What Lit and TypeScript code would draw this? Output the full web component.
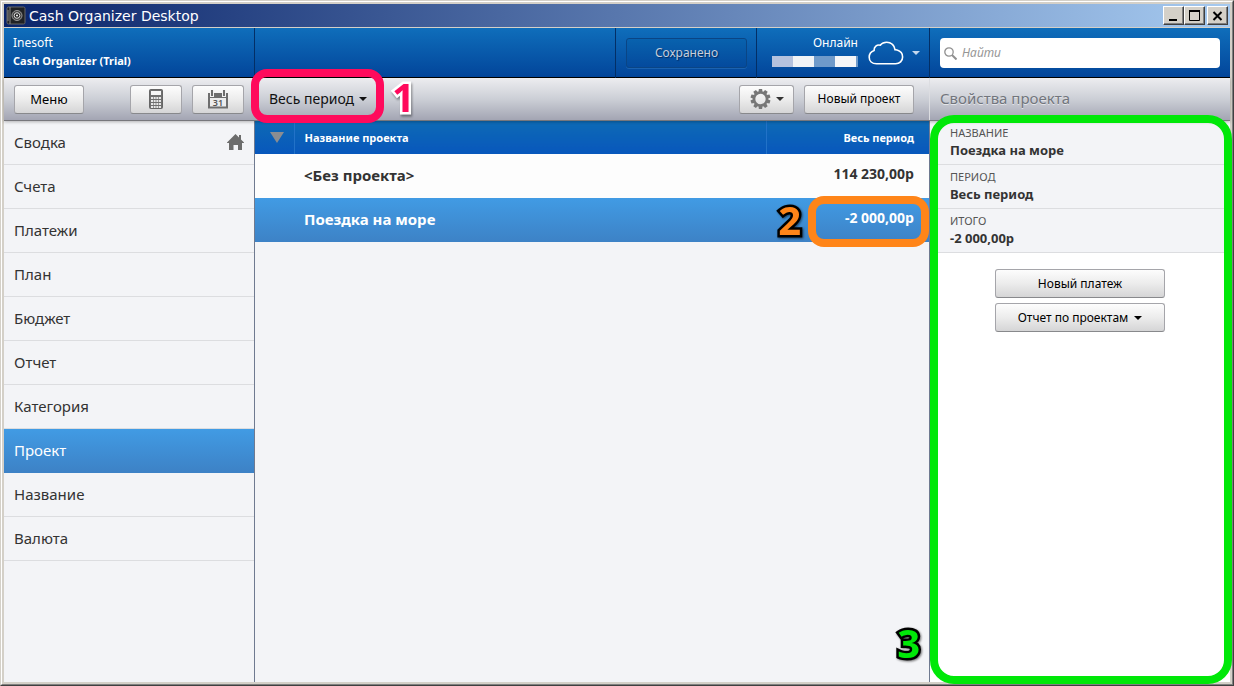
import { LitElement, html, css, svg } from "lit";
import { customElement, state } from "lit/decorators.js";

const sections = ["Сводка", "Счета", "Платежи", "План", "Бюджет", "Отчет", "Категория", "Проект", "Название", "Валюта"];
const projects = [
  { name: "<Без проекта>", total: "114 230,00р" },
  { name: "Поездка на море", total: "-2 000,00р" },
];
const details = [
  ["Название", "Поездка на море"],
  ["Период", "Весь период"],
  ["Итого", "-2 000,00р"],
];
const accountMask = ["#b5c2de", "#f1f3f6", "#6f9aca", "#f5f6f8"];

const caret = html`<svg class="caret" width="8" height="4" viewBox="0 0 8 4" aria-hidden="true"><path d="M0 0h8L4 4z" fill="currentColor"/></svg>`;

@customElement("app-root")
export class AppRoot extends LitElement {
  @state() private section = "Проект";
  @state() private project = 1;

  static styles = css`
    :host {
      display: block;
      font-family: "Noto Sans", "Open Sans", sans-serif;
      font-size: 13px;
      line-height: 18px;
      color: #333;
    }
    * { box-sizing: border-box; }
    button, input { font: inherit; color: inherit; margin: 0; }
    button { cursor: pointer; white-space: nowrap; }
    svg { display: block; flex: none; }
    .window {
      position: relative;
      min-height: 100vh;
      display: flex;
      flex-direction: column;
      background: #d4d0c8;
      border: 1px solid #d4d0c8;
      border-right-color: #404040;
      border-bottom-color: #404040;
    }
    .frame {
      flex: 1;
      display: flex;
      flex-direction: column;
      border: 1px solid #fff;
      border-right-color: #808080;
      border-bottom-color: #808080;
      padding: 2px;
    }
    .titlebar {
      display: flex;
      align-items: center;
      gap: 3px;
      height: 24px;
      padding: 0 2px;
      background: linear-gradient(90deg, #0a246a, #a6caf0);
      border-bottom: 1px solid #d4d0c8;
      color: #fff;
    }
    .titlebar h1 { flex: 1; margin: 0; font: 400 14px/20px "DejaVu Sans", sans-serif; }
    .winbuttons { display: flex; }
    .winbuttons button {
      display: grid;
      place-items: center;
      width: 21px;
      height: 19px;
      padding: 0;
      color: #000;
      background: #d4d0c8;
      border: 1px solid #fff;
      border-right-color: #404040;
      border-bottom-color: #404040;
      box-shadow: inset -1px -1px #808080;
    }
    .winbuttons button:last-child { margin-left: 2px; }
    .columns { display: grid; grid-template-columns: 250px minmax(0, 1fr) 301px; }
    .header {
      height: 50px;
      color: #fff;
      background: linear-gradient(#0f6ebb, #02459a);
      border-bottom: 1px solid #000;
    }
    .header > * + *, .cell { border-left: 1px solid #032f66; }
    .brand { padding: 6px 9px; font-size: 12px; }
    .brand strong { display: block; font-size: 11px; }
    .status { display: flex; justify-content: flex-end; }
    .cell { display: flex; align-items: center; }
    .cell.save { padding: 0 9px 0 10px; }
    .saved {
      width: 121px;
      height: 30px;
      padding: 0;
      color: #c6cedb;
      font-size: 12px;
      text-shadow: 1px 1px 1px #012a60;
      background: linear-gradient(#0862ae, #044a9d);
      border: 1px solid #0a4585;
      border-radius: 3px;
      box-shadow: 0 1px #1b62b0;
    }
    .cell.account { gap: 10px; padding: 0 9px 0 15px; }
    .account .who { padding-bottom: 6px; font-size: 12px; text-align: right; }
    .account .mask { display: flex; height: 11px; margin-top: 4px; }
    .mask span { width: 21px; }
    .mask span:last-child { width: 23px; border-right: 2px solid #6f9aca; }
    .cloudlink {
      display: flex;
      align-items: center;
      gap: 8px;
      padding: 0;
      border: 0;
      background: none;
      color: #c4d7ee;
    }
    .search { padding: 10px; }
    .search label {
      display: flex;
      align-items: center;
      gap: 5px;
      height: 30px;
      padding: 0 4px;
      background: #fff;
      border-radius: 4px;
    }
    .search input { flex: 1; min-width: 0; padding: 0; border: 0; outline: 0; background: none; font-size: 12px; color: #333; }
    .search input::placeholder { color: #969696; font-style: italic; opacity: 1; }
    .toolbar {
      position: relative;
      height: 43px;
      background: linear-gradient(#ededf0, #cccfd6 50%, #a3a5b3);
      border-bottom: 1px solid #77777c;
      box-shadow: 0 1px 3px #0004;
    }
    .toolbar > * { display: flex; align-items: center; padding: 0 10px; gap: 10px; }
    .toolbar h2 {
      margin: 0;
      padding-bottom: 2px;
      border-left: 1px solid #dcdde1;
      color: #71757c;
      font-size: 15px;
      font-weight: 400;
      text-shadow: 0 1px #e4e5e9;
    }
    .toolbar .center { padding-right: 15px; }
    .btn {
      display: flex;
      align-items: center;
      justify-content: center;
      gap: 6px;
      height: 29px;
      padding: 0 10px;
      color: #000;
      background: linear-gradient(#fdfdfd, #ececec 50%, #d5d5d6);
      border: 1px solid #a5a5aa;
      border-bottom-color: #88898c;
      border-radius: 3px;
    }
    .create { width: 110px; font-size: 12px; }
    .menu { width: 70px; margin-right: auto; }
    .icon { width: 52px; padding: 0; }
    .gear { width: 55px; padding: 0; gap: 5px; color: #333; }
    .period {
      display: flex;
      align-items: center;
      gap: 5px;
      height: 30px;
      margin-right: auto;
      padding: 0 5px;
      border: 0;
      background: none;
      color: #111;
      font-size: 14px;
    }
    .content { flex: 1; background: #f3f4f7; }
    nav { display: flex; flex-direction: column; }
    nav a {
      display: flex;
      align-items: center;
      justify-content: space-between;
      height: 44px;
      padding: 0 10px 2px;
      border-bottom: 1px solid #dcdde0;
      color: #333;
      font-size: 15px;
      line-height: 20px;
      text-decoration: none;
    }
    nav a.on { color: #fff; background: linear-gradient(#419be4, #3d82c6); border-color: #3d82c6; }
    nav svg { color: #6c6c6c; }
    main { border-left: 1px solid #6f7a90; }
    table { width: 100%; border-collapse: collapse; table-layout: fixed; }
    th {
      height: 33px;
      padding: 0;
      text-align: left;
      color: #fff;
      font-size: 11px;
      background: linear-gradient(#0d6ab5, #0857bc);
    }
    th + th { border-left: 1px solid #2272c8; }
    .sort { width: 39px; }
    .sort svg { margin-left: 15px; }
    th.name { padding-left: 10px; }
    .total { width: 163px; text-align: right; padding-right: 15px; }
    td { height: 44px; padding: 0 0 2px; background: #fdfdfd; font-weight: 700; }
    td.name { padding-left: 10px; font-size: 15px; }
    td.total { padding-bottom: 4px; font-size: 14px; }
    tr.on { color: #fff; background: linear-gradient(#419be4, #3d82c6); }
    tr.on td { background: none; }
    aside { border-left: 1px solid #6f7a90; background: #fff; }
    dl { margin: 0; }
    dl div { height: 44px; padding: 3px 20px; background: #f3f4f7; border-bottom: 1px solid #dcdde0; }
    dt { font-size: 11px; line-height: 17px; text-transform: uppercase; color: #555; }
    dd { margin: 0; font-size: 13px; font-weight: 700; }
    .actions { display: flex; flex-direction: column; align-items: center; gap: 5px; padding: 16px; }
    .actions .btn { width: 170px; font-size: 12px; }
    .mark { position: absolute; pointer-events: none; }
    .ring { border: 8px solid; border-radius: 16px; }
    .ring.one { left: 250px; top: 68px; width: 133px; height: 54px; border-color: #ff0a5c; }
    .ring.two { right: 304px; top: 195px; width: 121px; height: 51px; border-color: #ff8519; }
    .ring.three { right: 1px; top: 114px; bottom: 1px; width: 302px; border-color: #00e808; border-radius: 24px; }
    .num { font: 700 40px/40px "Open Sans", "Noto Sans", sans-serif; paint-order: stroke; stroke-linejoin: round; -webkit-text-stroke: 5px #000; }
    .num.one { left: 391px; top: 76px; color: #ff0a5c; -webkit-text-stroke-color: #fff; filter: drop-shadow(1px 2px 1px #0006); }
    .num.two { right: 432px; top: 199px; color: #ff8519; filter: drop-shadow(1px 1px 1px #0008); }
    .num.three { right: 313px; bottom: 22px; color: #00e808; filter: drop-shadow(1px 1px 1px #0008); }
  `;

  render() {
    return html`
      <div class="window">
        <div class="frame">
          <div class="titlebar">
            <svg width="20" height="20" viewBox="0 0 20 20" aria-hidden="true">
              <rect x="1" y="1" width="18" height="17" rx="1.5" fill="#202225" stroke="#666"/>
              <path d="M4 1v17M2 4v11" stroke="#888"/>
              <circle cx="11" cy="9.500" r="5" fill="#444" stroke="#999"/>
              <circle cx="11" cy="9.500" r="2.800" fill="#222" stroke="#ddd"/>
              <circle cx="11" cy="9.500" r="1" fill="#fff"/>
            </svg>
            <h1>Cash Organizer Desktop</h1>
            <div class="winbuttons">
              <button aria-label="Свернуть"><svg width="13" height="12"><path d="M2 10h8" stroke="#000" stroke-width="2"/></svg></button>
              <button aria-label="Развернуть"><svg width="13" height="12"><path d="M1.500 1v9.500h10V1" fill="none" stroke="#000"/><path d="M1 1h11" stroke="#000" stroke-width="2"/></svg></button>
              <button aria-label="Закрыть"><svg width="13" height="12"><path d="M2.500 2l8 8M10.500 2l-8 8" stroke="#000" stroke-width="2"/></svg></button>
            </div>
          </div>
          <header class="header columns">
            <div class="brand">Inesoft<strong>Cash Organizer (Trial)</strong></div>
            <div class="status">
              <div class="cell save"><button class="saved">Сохранено</button></div>
              <div class="cell account">
                <div class="who">Онлайн
                  <div class="mask">${accountMask.map((c) => html`<span style="background:${c}"></span>`)}</div>
                </div>
                <button class="cloudlink" aria-label="Онлайн">
                  <svg width="36" height="25" viewBox="0 0 36 25"><path d="M8.500 22.800C4 22.800 1.200 20 1.200 16.200c0-3.400 2-5.700 4.900-6.700C5.800 5.800 9 3.300 12.300 4.200 14 2.100 16.300 1.200 18.600 1.200c4.600 0 8 3.100 8.400 7.400 1 0 1.500.2 2.100.5 3.400 1 5.500 3.600 5.500 6.900 0 3.900-3 6.800-7 6.800z" fill="none" stroke="#fff" stroke-width="1.600"/></svg>
                  ${caret}
                </button>
              </div>
            </div>
            <div class="search">
              <label>
                <svg width="13" height="13" viewBox="0 0 13 13" aria-hidden="true"><circle cx="5" cy="5" r="4.200" fill="none" stroke="#909090" stroke-width="1.300"/><path d="M8 8l4.500 4.500" stroke="#909090" stroke-width="2"/></svg>
                <input type="search" placeholder="Найти" aria-label="Найти" />
              </label>
            </div>
          </header>
          <div class="toolbar columns">
            <div>
              <button class="btn menu">Меню</button>
              <button class="btn icon" aria-label="Калькулятор">
                <svg width="14" height="20" viewBox="0 0 14 20">
                  <rect x=".5" y=".5" width="13" height="19" rx="1" fill="#707070" stroke="#666"/>
                  <path d="M2 2h10v4H2z" fill="#f6f6f6"/>
                  <path d="M2 9h10M2 12h10M2 15h10M2 18h10" stroke="#e8e8e8" stroke-width="2" stroke-dasharray="2 .660"/>
                </svg>
              </button>
              <button class="btn icon" aria-label="Календарь">
                <svg width="20" height="19" viewBox="0 0 20 19">
                  <path d="M0 3h20v15.500H0z" fill="#6e6e6e"/>
                  <path d="M2 8h16v8.500H2z" fill="#ececec"/>
                  <path d="M2 0h4v7H2zM14 0h4v7h-4z" fill="#f2f2f2"/>
                  <path d="M3 0h2v6H3zM15 0h2v6h-2z" fill="#6e6e6e"/>
                  <text x="10" y="15.500" text-anchor="middle" font-size="9" font-weight="600" fill="#555">31</text>
                </svg>
              </button>
            </div>
            <div class="center">
              <button class="period">Весь период ${caret}</button>
              <button class="btn gear" aria-label="Настройки">
                <svg width="21" height="20" viewBox="0 0 21 20">${svg`<g transform="translate(10.500 10)">${[0, 36, 72, 108, 144, 180, 216, 252, 288, 324].map((a) => svg`<path d="M-2-7l.4-3h3.200l.4 3z" fill="#777" transform="rotate(${a})"/>`)}<circle r="6.500" fill="none" stroke="#777" stroke-width="2.600"/></g>`}</svg>
                ${caret}
              </button>
              <button class="btn create">Новый проект</button>
            </div>
            <h2>Свойства проекта</h2>
          </div>
          <div class="content columns">
            <nav>
              ${sections.map((s, i) => html`
                <a href="#${i}" class=${s === this.section ? "on" : ""} @click=${() => (this.section = s)}>${s}
                  ${i ? "" : html`<svg width="17" height="16" viewBox="0 0 17 16" aria-hidden="true"><path d="M8.500 0l3.500 3.500V1h2v4.500L17 8.500V9h-2v7h-4v-5H6.500v5H2V9H0v-.5z" fill="currentColor"/></svg>`}
                </a>`)}
            </nav>
            <main>
              <table>
                <thead>
                  <tr>
                    <th class="sort"><svg width="14" height="11" viewBox="0 0 14 11" role="img" aria-label="Сортировка"><path d="M0 0h14L7 11z" fill="#8a8d91"/></svg></th>
                    <th class="name">Название проекта</th>
                    <th class="total">Весь период</th>
                  </tr>
                </thead>
                <tbody>
                  ${projects.map((p, i) => html`
                    <tr class=${i === this.project ? "on" : ""} @click=${() => (this.project = i)}>
                      <td></td><td class="name">${p.name}</td><td class="total">${p.total}</td>
                    </tr>`)}
                </tbody>
              </table>
            </main>
            <aside>
              <dl>${details.map(([k, v]) => html`<div><dt>${k}</dt><dd>${v}</dd></div>`)}</dl>
              <div class="actions">
                <button class="btn">Новый платеж</button>
                <button class="btn">Отчет по проектам ${caret}</button>
              </div>
            </aside>
          </div>
        </div>
        <div class="mark ring one"></div>
        <div class="mark ring two"></div>
        <div class="mark ring three"></div>
        <span class="mark num one">1</span>
        <span class="mark num two">2</span>
        <span class="mark num three">3</span>
      </div>
    `;
  }
}
